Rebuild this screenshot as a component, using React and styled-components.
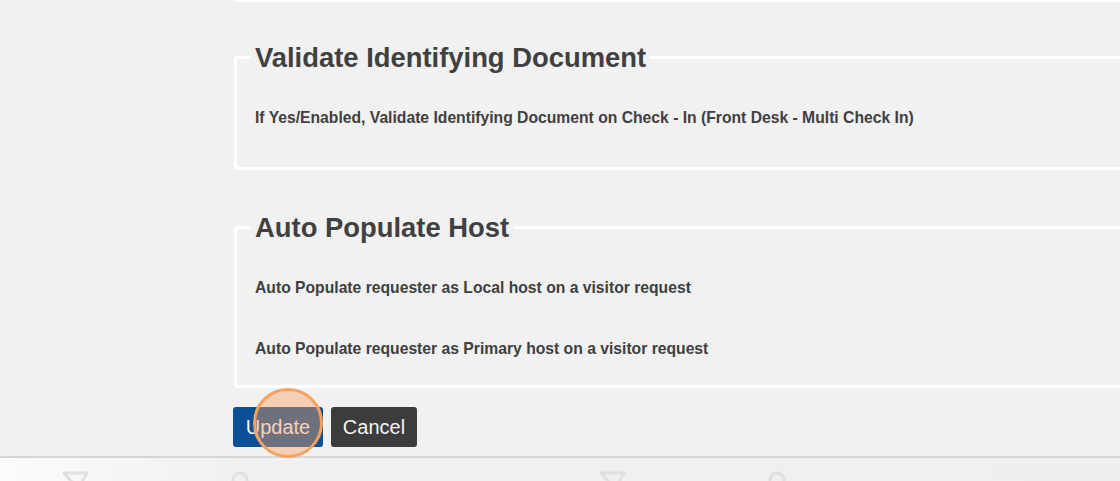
import styled, { createGlobalStyle } from "styled-components";

const GlobalStyle = createGlobalStyle`
  html, body {
    margin: 0;
    padding: 0;
    background: #f1f1f1;
    font-family: "Liberation Sans", Arial, sans-serif;
    color: #444;
    overflow: hidden;
  }
`;

const Page = styled.div`
  position: relative;
  height: 481px;
  display: flex;
  flex-direction: column;
`;

const Content = styled.div`
  flex: 1;
  padding-left: 234px;
  display: flex;
  flex-direction: column;
`;

const PrevSectionEnd = styled.div`
  height: 0;
  margin-top: -1px;
  border-bottom: 3px solid #fff;
  border-left: 3px solid #fff;
  border-bottom-left-radius: 4px;
`;

const Section = styled.fieldset`
  margin: ${({ top }) => top}px -10px 0 0;
  padding: 0 0 ${({ bottom }) => bottom}px 18px;
  border: 3px solid #fff;
  border-right: none;
  border-radius: 4px 0 0 4px;
  min-width: 0;
`;

const Legend = styled.legend`
  margin-left: -4px;
  padding: 0 4px;
  font-size: 27.4px;
  line-height: 30px;
  padding-top: 1px;
  font-weight: bold;
  color: #404040;
`;

const Setting = styled.div`
  margin-top: ${({ top }) => top}px;
  font-size: 15.7px;
  line-height: 18px;
  font-weight: bold;
  color: #404040;
  white-space: nowrap;
`;

const Actions = styled.div`
  display: flex;
  gap: 8px;
  margin-top: 19px;
  margin-left: -1px;
`;

const Button = styled.button`
  width: ${({ width }) => width}px;
  height: 40px;
  padding: 0;
  border: none;
  border-radius: 3px;
  background: ${({ variant }) => (variant === "primary" ? "#0b4f96" : "#3c3c3c")};
  color: #f4f4f4;
  font-family: "Liberation Sans", Arial, sans-serif;
  font-size: 20px;
  font-weight: normal;
  cursor: pointer;
`;

const Footer = styled.div`
  height: 23px;
  border-top: 2px solid #d6d6d6;
  background: linear-gradient(90deg, #fbfbfb 0%, #f0f0f0 22%, #efefef 100%);
  display: flex;
  overflow: hidden;
`;

const Tile = styled.div`
  box-sizing: border-box;
  flex: 0 0 537px;
  display: flex;
  align-items: flex-start;
  padding-top: 13px;
  padding-left: 62px;
  gap: 142px;
`;

const ClickMark = styled.div`
  position: absolute;
  left: 253px;
  top: 388px;
  width: 64px;
  height: 64px;
  border-radius: 50%;
  border: 3px solid #f3a25f;
  background: rgba(247, 160, 92, 0.42);
  pointer-events: none;
`;

const Plane = () => (
  <svg width="27" height="14" viewBox="0 0 27 14" fill="none">
    <path d="M2 2 L25 2 L16 18 Z" stroke="#e0e0e0" strokeWidth="3" strokeLinejoin="round" />
  </svg>
);

const Pin = () => (
  <svg width="18" height="14" viewBox="0 0 18 14" fill="none">
    <circle cx="9" cy="9" r="7" stroke="#e0e0e0" strokeWidth="3" />
  </svg>
);

const FooterTile = () => (
  <Tile>
    <Plane />
    <Pin />
  </Tile>
);

export default function App() {
  return (
    <>
      <GlobalStyle />
      <Page>
        <Content>
          <PrevSectionEnd />
          <Section top={40} bottom={40}>
            <Legend>Validate Identifying Document</Legend>
            <Setting top={36}>
              If Yes/Enabled, Validate Identifying Document on Check - In (Front Desk - Multi Check In)
            </Setting>
          </Section>
          <Section top={42} bottom={27}>
            <Legend>Auto Populate Host</Legend>
            <Setting top={36}>Auto Populate requester as Local host on a visitor request</Setting>
            <Setting top={43}>Auto Populate requester as Primary host on a visitor request</Setting>
          </Section>
          <Actions>
            <Button variant="primary" width={90}>Update</Button>
            <Button width={86}>Cancel</Button>
          </Actions>
        </Content>
        <Footer>
          <FooterTile />
          <FooterTile />
          <FooterTile />
        </Footer>
        <ClickMark />
      </Page>
    </>
  );
}
